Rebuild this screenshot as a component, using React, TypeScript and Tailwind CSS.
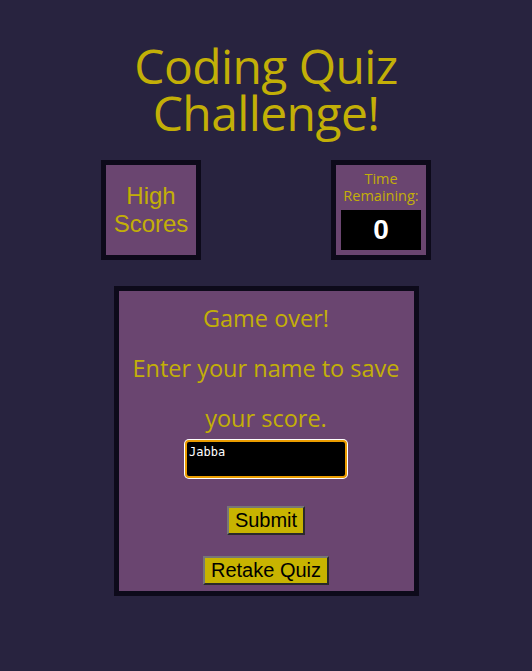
export default function App() {
  return (
    <div className="min-h-[671px] w-full bg-[#28233f] font-['Open_Sans',sans-serif] text-[#c3af07]">
      <div className="mx-auto flex w-[330px] flex-col items-center pt-[42px]">
        <h1 className="text-center text-[48px] leading-[47px] tracking-[-0.6px]">
          Coding Quiz
          <br />
          Challenge!
        </h1>

        <div className="mt-[24px] flex w-full justify-between">
          <div className="flex h-[100px] w-[100px] items-center justify-center border-[5px] border-[#0d0a1a] bg-[#6a4570]">
            <p className="text-center font-['Liberation_Sans',sans-serif] text-[24px] leading-[28px]">
              High
              <br />
              Scores
            </p>
          </div>

          <div className="flex h-[100px] w-[100px] flex-col items-center border-[5px] border-[#0d0a1a] bg-[#6a4570] pt-[5px]">
            <p className="text-center text-[14.5px] leading-[17px]">
              Time
              <br />
              Remaining:
            </p>
            <div className="mt-[6px] flex h-[40px] w-[80px] items-center justify-center bg-black font-['Liberation_Sans',sans-serif] text-[28px] font-bold text-white">
              0
            </div>
          </div>
        </div>

        <div className="mt-[26px] flex w-[305px] flex-col items-center border-[5px] border-[#0d0a1a] bg-[#6a4570] pb-[6px]">
          <h2 className="mt-[2px] text-center text-[23.5px] leading-[50px]">Game over!</h2>
          <h2 className="text-center text-[23.5px] leading-[50px]">
            Enter your name to save
            <br />
            your score.
          </h2>
          <textarea
            readOnly
            value="Jabba"
            className="-mt-[3px] h-[38px] w-[162px] resize-none rounded-[4px] border-2 border-[#ea9c00] bg-black px-[2px] pt-[3px] font-['DejaVu_Sans_Mono',monospace] text-[12px] leading-[14px] text-white outline-none ring-1 ring-white"
          />
          <button
            type="button"
            className="mt-[28px] h-[29px] border-2 border-t-[#777] border-l-[#777] border-r-[#2a2a2a] border-b-[#2a2a2a] bg-[#c8b400] px-[6px] font-['Liberation_Sans',sans-serif] text-[20px] leading-[23px] text-black"
          >
            Submit
          </button>
          <button
            type="button"
            className="mt-[21px] h-[29px] border-2 border-t-[#777] border-l-[#777] border-r-[#2a2a2a] border-b-[#2a2a2a] bg-[#c8b400] px-[6px] font-['Liberation_Sans',sans-serif] text-[20px] leading-[23px] text-black"
          >
            Retake Quiz
          </button>
        </div>
      </div>
    </div>
  );
}
